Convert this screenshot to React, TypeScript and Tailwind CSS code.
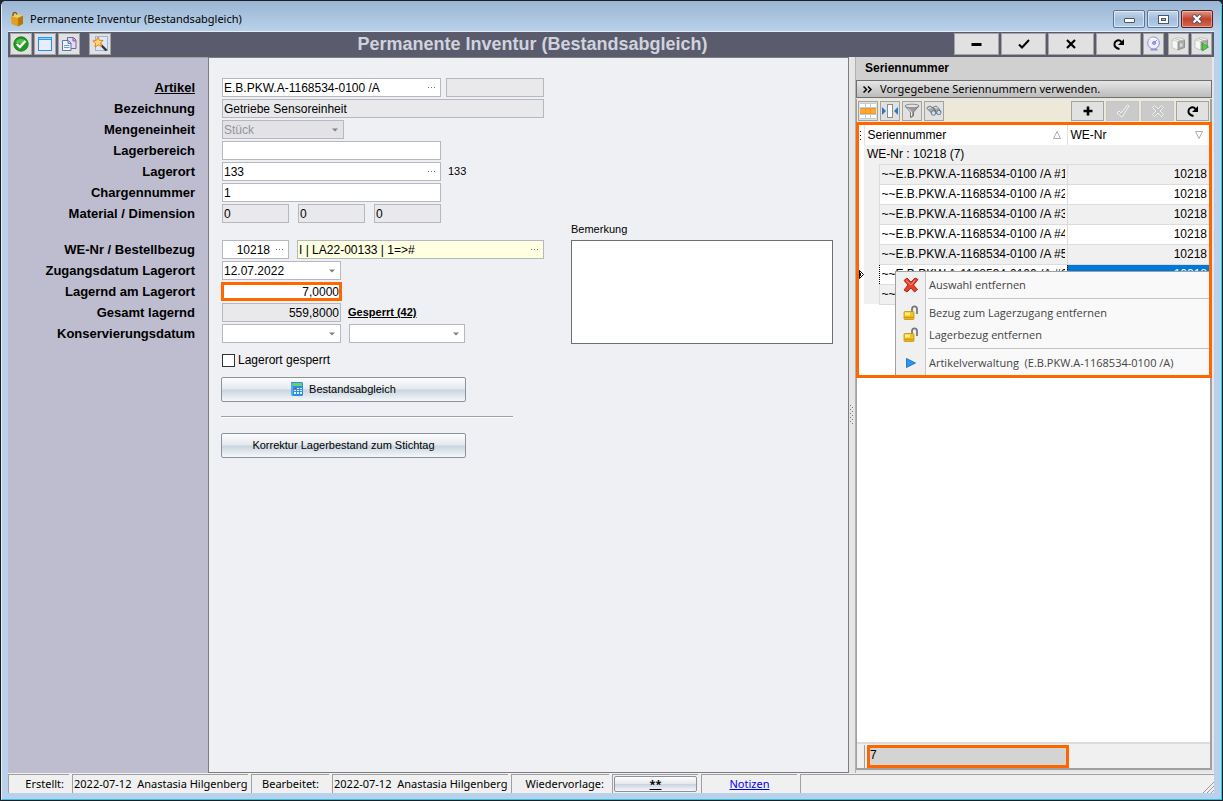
import React from 'react'
import clsx from 'clsx'

const CheckCircleIcon = () => (
  <svg width="16" height="16" viewBox="0 0 16 16">
    <circle cx="8" cy="8" r="7.2" fill="#1f9a1f" stroke="#0d6e12" strokeWidth="0.8" />
    <path d="M2.5 6.5a6 6 0 0 1 11 0c-3 1.5-8 1.5-11 0z" fill="#6fd060" opacity="0.7" />
    <path d="M3.8 8l3 3 5.6-6" fill="none" stroke="#fff" strokeWidth="2.4" />
  </svg>
)

const WindowIcon = () => (
  <svg width="16" height="16" viewBox="0 0 16 16">
    <rect x="1.5" y="1.5" width="13" height="13" fill="#eceafd" stroke="#1e8ff0" />
    <rect x="1" y="1" width="14" height="3" fill="#1e9bf5" />
    <path d="M2 2.500h12" stroke="#8fd4ff" />
  </svg>
)

const CopyIcon = () => (
  <svg width="16" height="16" viewBox="0 0 16 16">
    <path d="M6.5 1.5h6l2.5 2.5v8.5H6.5z" fill="#e4daf2" stroke="#7a62a8" />
    <path d="M12 1.5V5h3" fill="#b9a4d8" stroke="#7a62a8" />
    <path d="M1.5 4.500h6l2.500 2.500v7.500H1.500z" fill="#eef3fb" stroke="#5a7ba8" />
    <path d="M3 9.500h5.500M3 11.500h5.500" stroke="#7c9cc6" />
    <path d="M7 4.500V7.500h3" fill="#b9cbe4" stroke="#5a7ba8" />
  </svg>
)

const WandIcon = () => (
  <svg width="16" height="16" viewBox="0 0 16 16">
    <rect x="3.500" y="0.500" width="12" height="14" fill="#dde5f6" stroke="#9fb2d8" />
    <path d="M8 8l6.500 6.500" stroke="#333" strokeWidth="2.400" />
    <path d="M7.500 7.500l2 2" stroke="#bbb" strokeWidth="2" />
    <path d="M6 1l1.300 3.200L11 4.500 8.500 7l1.200 3.500L6.300 9 3 11l.5-3.700L.8 5l3.600-.7z" fill="#ffd76a" stroke="#e0761a" strokeWidth="0.900" />
  </svg>
)

const BoxIcon = () => (
  <svg width="16" height="16" viewBox="0 0 16 16">
    <path d="M2 5l4-1 3 2.500v9L2.500 13z" fill="#dfa024" />
    <path d="M2 5l5-2 7 1.500L9 7z" fill="#f7cd5a" />
    <path d="M9 7l5-2.500v8.500l-5 2.500z" fill="#b87808" />
    <path d="M4 5C3.500 1 7 0 8 3.500" fill="none" stroke="#8a5a0a" strokeWidth="1.400" />
  </svg>
)

const DishIcon = () => (
  <svg width="16" height="16" viewBox="0 0 16 16">
    <path d="M4 14.500h8l-2-3H6z" fill="#8f94d8" />
    <ellipse cx="7.500" cy="7" rx="5.800" ry="6" fill="#ededff" stroke="#8d92dc" />
    <path d="M4 3.500a5 5 0 0 1 7 1" stroke="#fff" strokeWidth="1.500" fill="none" />
    <circle cx="8" cy="7" r="1.500" fill="#b4b8f4" stroke="#7176cc" strokeWidth="0.800" />
    <path d="M8 7l3-3" stroke="#7176cc" strokeWidth="0.800" />
  </svg>
)

const CubeIcon = ({ play = false }: { play?: boolean }) => (
  <svg width="17" height="16" viewBox="0 0 17 16">
    <path d="M2 4l5-2.500L14 3v8l-7 3-5-2.500z" fill="#f6f6f4" stroke="#b4b4b0" strokeWidth="0.700" />
    <path d="M8 5.500l6.500-1.500v7.500L8 14z" fill="#a9a9a7" stroke="#80807e" strokeWidth="0.700" />
    <path d="M2 4l6 1.500L14.500 4" fill="none" stroke="#c2c2be" strokeWidth="0.700" />
    <path d="M10 7.500l2.500-.6v3.300l-2.500.9z" fill="#d9d9d7" />
    <path d="M5 2.600l6 1.900" stroke="#8fc6a0" strokeWidth="0.800" />
    {play && <path d="M9.500 7l6 4-6 4z" fill="#4ccf3c" stroke="#2a9a28" strokeWidth="0.700" />}
  </svg>
)

const Minus = () => (
  <svg width="11" height="11" viewBox="0 0 11 11">
    <path d="M0.500 5.500h10" stroke="currentColor" strokeWidth="3" />
  </svg>
)

const Plus = () => (
  <svg width="10" height="10" viewBox="0 0 10 10">
    <path d="M0.500 5h9M5 0.500v9" stroke="currentColor" strokeWidth="2.600" />
  </svg>
)

const Check = () => (
  <svg width="12" height="10" viewBox="0 0 12 10">
    <path d="M1 5.500l3 3L11 1" fill="none" stroke="currentColor" strokeWidth="2" />
  </svg>
)

const Cross = () => (
  <svg width="10" height="10" viewBox="0 0 10 10">
    <path d="M1 1l8 8M9 1L1 9" stroke="currentColor" strokeWidth="2.200" />
  </svg>
)

const Refresh = () => (
  <svg width="12" height="12" viewBox="0 0 12 12">
    <path d="M6.500 11C3 10.500 1 8 1.500 5.500 2 2.500 6 .8 8.500 4" fill="none" stroke="currentColor" strokeWidth="2" />
    <path d="M11 1v6H5z" fill="currentColor" />
  </svg>
)

const DisabledCheck = () => (
  <svg width="14" height="14" viewBox="0 0 14 14">
    <path d="M1 9l2-2 2 2 6.500-8 1.500 1L6 13z" fill="#c4c4c4" stroke="#f4f4f4" />
  </svg>
)

const DisabledCross = () => (
  <svg width="14" height="14" viewBox="0 0 14 14">
    <path d="M1.500 3.500l2-2L7 5l3.500-3.500 2 2L9 7l3.500 3.500-2 2L7 9l-3.500 3.500-2-2L5 7z" fill="#c4c4c4" stroke="#f0f0f0" />
  </svg>
)

const GridIcon = () => (
  <svg width="16" height="16" viewBox="0 0 16 16">
    <rect width="16" height="16" fill="#c3cbd2" />
    <path d="M0 1h5v3H0zM6 1h4v3H6zM11 1h5v3h-5zM0 12h5v3H0zM6 12h4v3H6zM11 12h5v3h-5z" fill="#fff" />
    <rect y="5" width="16" height="6" fill="#f7981d" />
    <path d="M0 6h5v4H0zM6 6h4v4H6zM11 6h5v4h-5z" fill="#fbab40" />
  </svg>
)

const ColumnIcon = () => (
  <svg width="16" height="16" viewBox="0 0 16 16">
    <path d="M0 4l4 4-4 4zM16 4l-4 4 4 4z" fill="#2f78c0" />
    <rect x="5.500" y="1.500" width="5" height="13" fill="#fff" stroke="#8c8c8c" />
  </svg>
)

const FunnelIcon = () => (
  <svg width="16" height="16" viewBox="0 0 16 16">
    <path d="M1 3l5.500 6v5.500l3-1.500V9L15 3z" fill="#9d9d9d" stroke="#666" strokeWidth="0.800" />
    <path d="M4 5.500L7.500 9v4" fill="none" stroke="#eee" />
    <ellipse cx="8" cy="3" rx="7" ry="1.800" fill="#e3e3e3" stroke="#777" strokeWidth="0.800" />
  </svg>
)

const BinocularsIcon = () => (
  <svg width="16" height="16" viewBox="0 0 16 16">
    <path d="M1 5.500c0-2 3-3 5-1.500l4 4-3 3.500zM7 4.500c2-2 4-1.500 5.500.5L15 9l-4 2z" fill="#a4a9ad" stroke="#5f656a" strokeWidth="0.700" />
    <circle cx="7.500" cy="10" r="2.300" fill="#c4e0f2" stroke="#5f656a" strokeWidth="0.800" />
    <circle cx="12.800" cy="9.500" r="2.200" fill="#c4e0f2" stroke="#5f656a" strokeWidth="0.800" />
    <path d="M2 5.500l3-1M8.500 4.500l3 .5" stroke="#e8ecef" />
  </svg>
)

const CalculatorIcon = () => (
  <svg width="12" height="15" viewBox="0 0 12 15">
    <path d="M0 0h11l1 1v12l-1 1H2l-2-1z" fill="#2a8fe0" />
    <rect x="2" y="1" width="9" height="3" fill="#6fce6a" />
    <path d="M1 1v12" stroke="#7cc4f8" />
    <path d="M3 6h2v1H3z" fill="#e33" />
    <path d="M6 6h2v1H6zM9 6h2v1H9zM3 8h2v1H3zM6 8h2v1H6zM9 8h2v1H9zM3 10h2v2H3zM6 10h2v2H6zM9 10h2v2H9z" fill="#e4f3ff" />
  </svg>
)

const RedCrossIcon = () => (
  <svg width="16" height="16" viewBox="0 0 16 16">
    <path d="M1 3.500L4 1l4 4 4-4 3 1.500L10.500 8l4 4.500-3 2.500L8 11l-4 4-3-2 4-5z" fill="#e8402a" stroke="#a81b10" strokeWidth="0.900" />
    <path d="M3 3.500L8 8l4-5" fill="none" stroke="#ff9a80" />
  </svg>
)

const LockIcon = () => (
  <svg width="16" height="16" viewBox="0 0 16 16">
    <path d="M9 7V4c0-3.500 5-3.500 5 0v5" fill="none" stroke="#777" strokeWidth="1.800" />
    <rect x="1" y="6.500" width="10" height="8" rx="1" fill="#f5c21a" stroke="#b8860b" strokeWidth="0.700" />
    <path d="M2 7.500h5v3H2z" fill="#fff08a" />
    <path d="M1.500 12.500h9" stroke="#cf9a0c" strokeWidth="1.500" />
  </svg>
)

const PlayIcon = () => (
  <svg width="10" height="10" viewBox="0 0 10 10">
    <path d="M0.500 0.500L9.500 5l-9 4.500z" fill="#2b95f0" stroke="#1468b8" strokeWidth="0.800" />
  </svg>
)

const Caret = () => (
  <svg width="6" height="4" viewBox="0 0 6 4">
    <path d="M0 0.500h6L3 3.500z" fill="#808080" />
  </svg>
)

const ToolButton = ({ label, className, children, disabled }: { label: string; className: string; children: React.ReactNode; disabled?: boolean }) => (
  <button
    aria-label={label}
    disabled={disabled}
    className={clsx('flex shrink-0 items-center justify-center border', className, disabled ? 'border-[#c4c4c4] bg-[#cacaca]' : 'border-[#a3a3a3] bg-[#e1e1e1]')}
  >
    {children}
  </button>
)

type FieldProps = {
  id?: string
  label?: string
  value?: string
  className: string
  lookup?: boolean
  right?: boolean
  disabled?: boolean
}

const Field = ({ id, label, value = '', className, lookup, right, disabled }: FieldProps) => (
  <div className={clsx('flex h-[19px] items-center border', className)}>
    <input
      id={id}
      aria-label={label}
      defaultValue={value}
      readOnly={disabled}
      className={clsx('h-full w-full min-w-0 bg-transparent px-px outline-none', right && 'text-right')}
    />
    {lookup && (
      <button aria-label="Auswählen" className="flex h-full w-[17px] shrink-0 items-center justify-center text-gray-500">
        <svg width="8" height="2" viewBox="0 0 8 2">
          <path d="M0 0h1v1H0zM3 0h1v1H3zM6 0h1v1H6z" fill="currentColor" />
        </svg>
      </button>
    )}
  </div>
)

const Combo = ({ id, label, value = '', className, disabled }: FieldProps) => (
  <div className={clsx('relative h-[19px] border border-[#b5b8c0]', className, disabled ? 'bg-[#e3e3e7] text-[#949499]' : 'bg-white')}>
    <select id={id} aria-label={label} disabled={disabled} defaultValue={value} className="block h-full w-full appearance-none bg-transparent px-px opacity-100 outline-none">
      <option>{value}</option>
    </select>
    <span className="pointer-events-none absolute inset-y-0 right-[5px] flex items-center">
      <Caret />
    </span>
  </div>
)

const white = 'border-[#b5b8c0] bg-white'
const gray = 'border-[#b5b8c0] bg-[#e9e9eb]'

const LABELS_TOP = [
  ['bezeichnung', 'Bezeichnung'],
  ['einheit', 'Mengeneinheit'],
  ['bereich', 'Lagerbereich'],
  ['lagerort', 'Lagerort'],
  ['charge', 'Chargennummer'],
  ['material', 'Material / Dimension'],
]

const LABELS_BOTTOM = [
  ['wenr', 'WE-Nr / Bestellbezug'],
  ['zugang', 'Zugangsdatum Lagerort'],
  ['lagernd', 'Lagernd am Lagerort'],
  ['gesamt', 'Gesamt lagernd'],
  ['konserv', 'Konservierungsdatum'],
]

const TitleBar = () => (
  <header className="flex h-[30px] shrink-0 items-center bg-linear-to-b from-[#9ab5d3] to-[#b9d1ea] pt-[6px] pr-2 pl-[7px]">
    <BoxIcon />
    <span className="ml-[5px] flex-1 font-['Noto_Sans','Open_Sans',sans-serif] text-[11px]">Permanente Inventur (Bestandsabgleich)</span>
    <div className="flex gap-[2px]">
      <button aria-label="Minimieren" className="flex h-[18px] w-8 items-center justify-center rounded-[2px] border border-[#5c7594] bg-linear-to-b from-[#c5d8ec] via-[#a3bedb] to-[#b5cee8] shadow-[inset_0_0_0_1px_#ffffff80]">
        <span className="mt-[2px] h-[5px] w-[11px] rounded-[1px] border border-[#4d5566] bg-white" />
      </button>
      <button aria-label="Maximieren" className="flex h-[18px] w-8 items-center justify-center rounded-[2px] border border-[#5c7594] bg-linear-to-b from-[#c5d8ec] via-[#a3bedb] to-[#b5cee8] shadow-[inset_0_0_0_1px_#ffffff80]">
        <svg width="11" height="9" viewBox="0 0 11 9">
          <rect x="0.500" y="0.500" width="10" height="8" fill="#fff" stroke="#4d5566" />
          <rect x="3.500" y="3.500" width="4" height="2" fill="#a3bedb" stroke="#4d5566" />
        </svg>
      </button>
      <button aria-label="Schließen" className="flex h-[18px] w-8 items-center justify-center rounded-[2px] border border-[#5b1e1a] bg-linear-to-b from-[#dd988a] via-[#c4402a] to-[#cf6a50] shadow-[inset_0_0_0_1px_#ffffff60]">
        <svg width="12" height="10" viewBox="0 0 12 10">
          <path d="M2 1l8 8M10 1L2 9" stroke="#4d5566" strokeWidth="4" />
          <path d="M2.500 1.500l7 7M9.500 1.500l-7 7" stroke="#fff" strokeWidth="2.200" />
        </svg>
      </button>
    </div>
  </header>
)

const Toolbar = () => (
  <div className="flex h-[26px] shrink-0 items-center gap-[2px] border-t border-[#e8edf5] bg-[#5a5c6d] px-[2px] pb-px">
    <ToolButton label="Übernehmen" className="h-[22px] w-[22px]"><CheckCircleIcon /></ToolButton>
    <ToolButton label="Fenster" className="h-[22px] w-[22px]"><WindowIcon /></ToolButton>
    <ToolButton label="Kopieren" className="mr-[7px] h-[22px] w-[22px]"><CopyIcon /></ToolButton>
    <ToolButton label="Assistent" className="h-[22px] w-[22px]"><WandIcon /></ToolButton>
    <h1 className="flex-1 text-center text-[18px] leading-[20px] font-bold text-[#d0d3de]">Permanente Inventur (Bestandsabgleich)</h1>
    <ToolButton label="Entfernen" className="h-[22px] w-[45px]"><Minus /></ToolButton>
    <ToolButton label="Speichern" className="h-[22px] w-[45px]"><Check /></ToolButton>
    <ToolButton label="Abbrechen" className="h-[22px] w-[46px]"><Cross /></ToolButton>
    <ToolButton label="Aktualisieren" className="h-[22px] w-[45px]"><Refresh /></ToolButton>
    <ToolButton label="Verbindung" className="mr-[2px] h-[22px] w-[21px]"><DishIcon /></ToolButton>
    <ToolButton label="Artikel" className="h-[22px] w-[21px]"><CubeIcon /></ToolButton>
    <ToolButton label="Artikel starten" className="h-[22px] w-[21px]"><CubeIcon play /></ToolButton>
  </div>
)

const WideButton = ({ children }: { children: React.ReactNode }) => (
  <button className="-ml-px flex h-[25px] w-[245px] items-center justify-center gap-[6px] rounded-[2px] border border-[#8b929c] bg-[linear-gradient(#fdfdfe,#e4e9ee_48%,#c9d4de_52%,#f4f8fb)] text-[11px]">
    {children}
  </button>
)

const Labels = () => (
  <div className="flex w-[200px] shrink-0 flex-col items-end gap-[2px] border-t border-[#a0a0a0] bg-[#bdbdcf] pt-5 pr-[13px] text-[13px] leading-[19px] font-bold">
    <a href="#artikel" className="underline">Artikel</a>
    {LABELS_TOP.map(([id, text]) => (
      <label key={id} htmlFor={id}>{text}</label>
    ))}
    <div className="mt-[15px] flex flex-col items-end gap-[2px]">
      {LABELS_BOTTOM.map(([id, text]) => (
        <label key={id} htmlFor={id}>{text}</label>
      ))}
    </div>
  </div>
)

const Form = () => (
  <main className="min-w-0 flex-1 border border-[#7d7d7d] bg-[#eff0f3] pt-5 pl-[13px] text-[12px]">
    <div className="flex flex-col gap-[2px]">
      <div className="flex gap-[5px]">
        <Field id="artikel" label="Artikel" value="E.B.PKW.A-1168534-0100 /A" lookup className={clsx('w-[219px]', white)} />
        <Field label="Artikel Zusatz" disabled className={clsx('w-[98px]', gray)} />
      </div>
      <Field id="bezeichnung" value="Getriebe Sensoreinheit" disabled className={clsx('w-[322px]', gray)} />
      <Combo id="einheit" value="Stück" disabled className="w-[122px]" />
      <Field id="bereich" className={clsx('w-[219px]', white)} />
      <div className="flex items-center gap-[7px]">
        <Field id="lagerort" value="133" lookup className={clsx('w-[219px]', white)} />
        <span className="text-[11px]">133</span>
      </div>
      <Field id="charge" value="1" className={clsx('w-[219px]', white)} />
      <div className="flex gap-[9px]">
        <Field id="material" value="0" disabled className={clsx('w-[67px]', gray)} />
        <Field label="Dimension 1" value="0" disabled className={clsx('w-[67px]', gray)} />
        <Field label="Dimension 2" value="0" disabled className={clsx('w-[67px]', gray)} />
      </div>
    </div>

    <div className="flex gap-[27px]">
      <div className="flex w-[322px] shrink-0 flex-col gap-[2px] pt-[17px]">
        <div className="flex gap-2">
          <Field id="wenr" value="10218" right lookup className={clsx('w-[67px]', white)} />
          <Field label="Bestellbezug" value="I | LA22-00133 | 1=>#" lookup className="w-[247px] border-[#b5b8c0] bg-[#ffffe1]" />
        </div>
        <Combo id="zugang" value="12.07.2022" className="w-[119px]" />
        <div className="-mx-px flex h-[19px] w-[121px] border-3 border-[#ff6600] bg-white">
          <input id="lagernd" defaultValue="7,0000" className="h-[15px] w-full bg-transparent text-right leading-[15px] outline-none" />
        </div>
        <div className="flex items-center gap-[7px]">
          <Field id="gesamt" value="559,8000" right disabled className={clsx('w-[119px]', gray)} />
          <a href="#gesperrt" className="text-[11px] font-bold underline">Gesperrt (42)</a>
        </div>
        <div className="flex gap-2">
          <Combo id="konserv" className="w-[119px]" />
          <Combo label="Konservierungsdatum bis" className="w-[116px]" />
        </div>
      </div>
      <div className="flex flex-col">
        <label htmlFor="bemerkung" className="h-[17px] text-[11px] leading-[13px]">Bemerkung</label>
        <textarea id="bemerkung" className="h-[104px] w-[262px] resize-none border border-[#6e6e6e] bg-white p-1 outline-none" />
      </div>
    </div>

    <div className="mt-2 flex h-4 items-center gap-[3px]">
      <input id="gesperrt" type="checkbox" className="h-[13px] w-[13px] appearance-none border border-[#333] bg-white checked:bg-[#333]" />
      <label htmlFor="gesperrt">Lagerort gesperrt</label>
    </div>
    <div className="mt-[9px]">
      <WideButton><CalculatorIcon />Bestandsabgleich</WideButton>
    </div>
    <hr className="mt-[14px] mb-[15px] -ml-px h-[2px] w-[292px] border-t border-b border-t-[#a0a0a0] border-b-white" />
    <WideButton>Korrektur Lagerbestand zum Stichtag</WideButton>
  </main>
)

const MenuItem = ({ icon, children }: { icon: React.ReactNode; children: React.ReactNode }) => (
  <button role="menuitem" className="flex h-[22px] shrink-0 items-center whitespace-nowrap">
    <span className="mr-1 flex w-[29px] shrink-0 justify-center">{icon}</span>
    {children}
  </button>
)

const ContextMenu = () => (
  <div role="menu" className="absolute top-[146px] right-0 bottom-0 left-[36px] flex flex-col border-t border-l border-[#a0a0a0] bg-[linear-gradient(90deg,#f0f0f0_29px,#c8c8c8_29px,#c8c8c8_30px,#f9f9f9_30px)] pt-[2px] font-['Open_Sans','Noto_Sans',sans-serif] text-[11px] text-[#444]">
    <MenuItem icon={<RedCrossIcon />}>Auswahl entfernen</MenuItem>
    <hr className="mt-[2px] mb-[3px] ml-[32px] border-[#c3c3c3]" />
    <MenuItem icon={<LockIcon />}>Bezug zum Lagerzugang entfernen</MenuItem>
    <MenuItem icon={<LockIcon />}>Lagerbezug entfernen</MenuItem>
    <hr className="mt-[2px] mb-[3px] ml-[32px] border-[#c3c3c3]" />
    <MenuItem icon={<PlayIcon />}>Artikelverwaltung&nbsp; (E.B.PKW.A-1168534-0100 /A)</MenuItem>
  </div>
)

const SerialTable = () => (
  <div className="relative h-[256px] shrink-0 overflow-hidden border-3 border-[#ff6600] bg-white text-[12px]">
    <table className="w-full table-fixed border-collapse">
      <colgroup>
        <col className="w-[5px]" />
        <col className="w-[15px]" />
        <col className="w-[188px]" />
        <col />
      </colgroup>
      <thead>
        <tr className="h-5 text-left">
          <th className="p-0 font-normal">
            <svg width="3" height="9" viewBox="0 0 3 9"><path d="M1 0h1v1H1zM1 4h1v1H1zM1 8h1v1H1z" fill="#000" /></svg>
          </th>
          <th colSpan={2} className="border-r border-l border-[#e2e2e2] p-0 pr-[6px] pl-[3px] font-normal">
            <span className="flex items-center justify-between">
              Seriennummer
              <svg width="8" height="8" viewBox="0 0 8 8"><path d="M0.500 7.500h7L4 0.500z" fill="none" stroke="#999" strokeWidth="0.800" /></svg>
            </span>
          </th>
          <th className="p-0 pr-[6px] pl-[3px] font-normal">
            <span className="flex items-center justify-between">
              WE-Nr
              <svg width="8" height="8" viewBox="0 0 8 8"><path d="M0.500 0.500h7L4 7.500z" fill="none" stroke="#999" strokeWidth="0.800" /></svg>
            </span>
          </th>
        </tr>
      </thead>
      <tbody>
        <tr className="h-[19px] bg-[#f0f0f0]">
          <td className="bg-white p-0" />
          <td colSpan={3} className="p-0 pl-[3px]">WE-Nr : 10218 (7)</td>
        </tr>
        {[1, 2, 3, 4, 5, 6, 7].map((n) => (
          <tr key={n} className={clsx('h-5', n % 2 === 1 && 'bg-[#f0f0f0]')}>
            <td className="bg-white p-0">
              {n === 6 && <svg width="5" height="9" viewBox="0 0 5 9"><path d="M0.500 0.500l4 4-4 4z" fill="none" stroke="#000" /><path d="M0 3h2v3H0z" /></svg>}
            </td>
            <td className="bg-[#f0f0f0] p-0" />
            <td className={clsx('overflow-hidden border p-0 px-[2px] whitespace-nowrap', n === 6 ? 'border-dotted border-black' : 'border-[#dcdcdc]')}>
              <span className="block overflow-hidden">~~E.B.PKW.A-1168534-0100 /A #{n}</span>
            </td>
            <td className={clsx('border-y border-[#dcdcdc] p-0 pr-[2px] text-right', n === 6 && 'bg-[#0078d7] text-white')}>10218</td>
          </tr>
        ))}
      </tbody>
    </table>
    <ContextMenu />
  </div>
)

const SerialPanel = () => (
  <aside className="flex w-[359px] shrink-0 flex-col border-l border-[#b0b0b0] bg-[#e6e6e6] pr-[2px] pb-[3px]">
    <h2 className="h-[23px] shrink-0 bg-[#d0d0d0] pl-[9px] text-[12px] leading-[22px] font-bold">Seriennummer</h2>
    <button className="flex h-[18px] shrink-0 items-center gap-2 border border-[#707070] bg-linear-to-b from-[#e6e6e6] to-[#bcbcbc] pl-[6px] font-['Noto_Sans','Open_Sans',sans-serif] text-[11px]">
      <svg width="9" height="7" viewBox="0 0 9 7"><path d="M0.500 0.500l3 3-3 3M5 0.500l3 3-3 3" fill="none" stroke="#000" strokeWidth="1.500" /></svg>
      Vorgegebene Seriennummern verwenden.
    </button>
    <div className="mt-px flex min-h-0 flex-1 flex-col border-r-2 border-b-2 border-l border-[#a0a0a0] bg-white">
      <div className="flex h-[23px] shrink-0 items-center gap-[2px] bg-[#ece9d8] px-px pt-px">
        <ToolButton label="Layout" className="h-5 w-5"><GridIcon /></ToolButton>
        <ToolButton label="Spaltenbreite" className="h-5 w-5"><ColumnIcon /></ToolButton>
        <ToolButton label="Filter" className="h-5 w-5"><FunnelIcon /></ToolButton>
        <ToolButton label="Suchen" className="mr-auto h-5 w-5"><BinocularsIcon /></ToolButton>
        <ToolButton label="Hinzufügen" className="h-5 w-[33px]"><Plus /></ToolButton>
        <ToolButton label="Bestätigen" disabled className="h-5 w-[33px]"><DisabledCheck /></ToolButton>
        <ToolButton label="Verwerfen" disabled className="h-5 w-[33px]"><DisabledCross /></ToolButton>
        <ToolButton label="Neu laden" className="h-5 w-[33px]"><Refresh /></ToolButton>
      </div>
      <div className="-mr-[2px] -ml-px flex flex-col">
        <SerialTable />
      </div>
      <div className="mt-auto flex h-[26px] shrink-0 items-end border-t-2 border-[#dcdcdc] bg-[#f0f0f0] pl-[7px]">
        <div className="h-[23px] w-[205px] border-l border-[#a0a0a0] pl-[2px]">
          <div className="h-full border-3 border-[#ff6600] bg-[#d4d4d4] text-[12px] leading-[14px]">7</div>
        </div>
      </div>
    </div>
  </aside>
)

const StatusCell = ({ className, children }: { className: string; children?: React.ReactNode }) => (
  <div className={clsx('flex h-[19px] items-center overflow-hidden border-t border-l border-[#a0a0a0] whitespace-pre', className)}>{children}</div>
)

const StatusBar = () => (
  <footer className="flex shrink-0 gap-[3px] bg-[#f0f0f0] pt-px font-['Noto_Sans','Open_Sans',sans-serif] text-[11px]">
    <StatusCell className="w-[61px] justify-end pr-[5px]">Erstellt:</StatusCell>
    <StatusCell className="w-[176px] pl-px">2022-07-12  Anastasia Hilgenberg</StatusCell>
    <StatusCell className="w-[78px] justify-end pr-[10px]">Bearbeitet:</StatusCell>
    <StatusCell className="w-[176px] pl-px">2022-07-12  Anastasia Hilgenberg</StatusCell>
    <StatusCell className="w-[98px] justify-end pr-[5px]">Wiedervorlage:</StatusCell>
    <StatusCell className="w-[86px] px-px">
      <button className="h-4 w-full rounded-[2px] border border-[#8b929c] bg-[linear-gradient(#fdfdfe,#e4e9ee_48%,#c9d4de_52%,#f4f8fb)] leading-[14px] font-bold underline">**</button>
    </StatusCell>
    <StatusCell className="w-[96px] justify-center"><a href="#notizen" className="text-[#0000ee] underline">Notizen</a></StatusCell>
    <StatusCell className="flex-1 items-end justify-end">
      <svg width="12" height="12" viewBox="0 0 12 12"><path d="M1 12L12 1M5 12l7-7M9 12l3-3" stroke="#9a9a9a" /></svg>
    </StatusCell>
  </footer>
)

export default function App() {
  return (
    <div className="h-screen bg-[#26222b] font-['Liberation_Sans',Arial,sans-serif] text-black">
      <div className="flex h-full flex-col overflow-hidden rounded-t-[6px] border border-[#1d1d24] bg-[#b9d1ea]">
        <div className="flex h-full flex-col rounded-t-[6px] border-r border-b border-l border-r-[#27c8e4] border-b-[#27c8e4] border-l-[#e6eef8]">
          <TitleBar />
          <div className="mr-[7px] mb-[6px] ml-[6px] flex min-h-0 flex-1 flex-col">
            <Toolbar />
            <div className="flex min-h-0 flex-1 bg-[#f0f0f0]">
              <Labels />
              <Form />
              <div className="flex w-[6px] shrink-0 items-center bg-[#e6e6e6] pl-px">
                <svg width="3" height="20" viewBox="0 0 3 20">
                  <path d="M0 0h1v1H0zM2 2h1v1H2zM0 4h1v1H0zM2 6h1v1H2zM0 8h1v1H0zM2 10h1v1H2zM0 12h1v1H0zM2 14h1v1H2zM0 16h1v1H0zM2 18h1v1H2z" fill="#777" />
                </svg>
              </div>
              <SerialPanel />
            </div>
            <StatusBar />
          </div>
        </div>
      </div>
    </div>
  )
}
